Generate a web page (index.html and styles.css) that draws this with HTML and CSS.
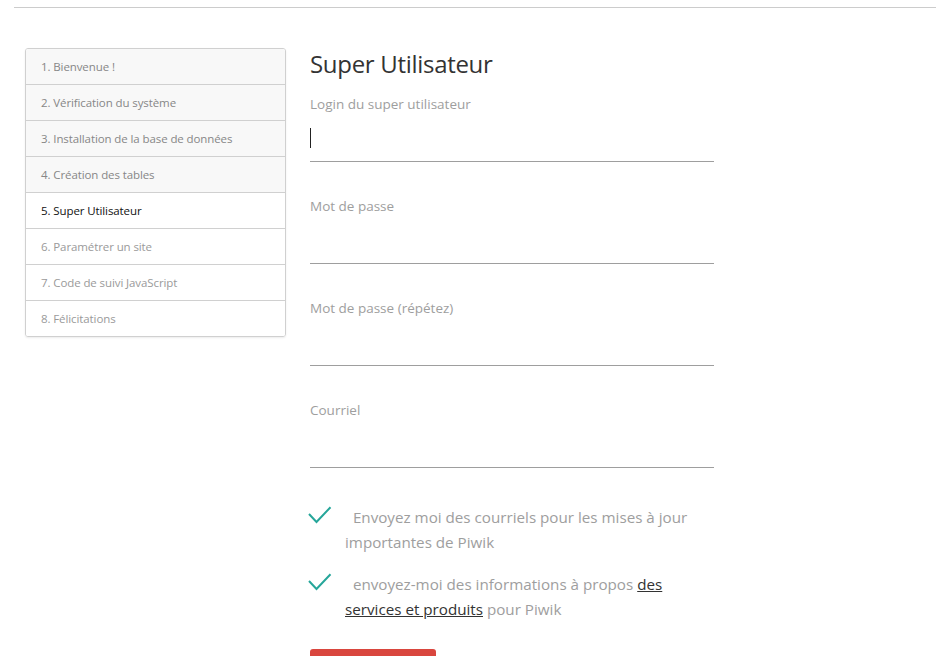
FILE: index.html
```html
<!DOCTYPE html>
<html lang="fr">
<head>
<meta charset="utf-8">
<title>Installation</title>
<link rel="stylesheet" href="styles.css">
</head>
<body>
<div class="header"></div>
<div class="page">
  <ul class="steps">
    <li class="done">1. Bienvenue !</li>
    <li class="done">2. Vérification du système</li>
    <li class="done">3. Installation de la base de données</li>
    <li class="done">4. Création des tables</li>
    <li class="current">5. Super Utilisateur</li>
    <li>6. Paramétrer un site</li>
    <li>7. Code de suivi JavaScript</li>
    <li>8. Félicitations</li>
  </ul>
  <form class="content">
    <h2 class="title">Super Utilisateur</h2>
    <div class="fields">
      <div class="field">
        <label class="label">Login du super utilisateur</label>
        <div class="input"><span class="caret"></span></div>
      </div>
      <div class="field">
        <label class="label">Mot de passe</label>
        <div class="input"></div>
      </div>
      <div class="field">
        <label class="label">Mot de passe (répétez)</label>
        <div class="input"></div>
      </div>
      <div class="field">
        <label class="label">Courriel</label>
        <div class="input"></div>
      </div>
    </div>
    <div class="checks">
      <div class="check">
        <svg class="tick" width="24" height="19" viewBox="0 0 24 19"><path d="M1 8 L8.5 16 L22.5 1.2" fill="none" stroke="#26a69a" stroke-width="2"/></svg>
        <p class="check-text">&nbsp;&nbsp;Envoyez moi des courriels pour les mises à jour importantes de Piwik</p>
      </div>
      <div class="check">
        <svg class="tick" width="24" height="19" viewBox="0 0 24 19"><path d="M1 8 L8.5 16 L22.5 1.2" fill="none" stroke="#26a69a" stroke-width="2"/></svg>
        <p class="check-text">&nbsp;&nbsp;envoyez-moi des informations à propos <a href="#">des services et produits</a> pour Piwik</p>
      </div>
    </div>
    <div class="submit">Suivant »</div>
  </form>
</div>
</body>
</html>
```
FILE: styles.css
```css
html, body {
  margin: 0;
  padding: 0;
  background: #fff;
  font-family: "Open Sans", "Noto Sans", sans-serif;
}
.header {
  height: 7px;
  margin-left: 14px;
  border-bottom: 1px solid #cccccc;
}
.page {
  display: flex;
  align-items: flex-start;
  padding-top: 40px;
  padding-left: 25px;
}
.steps {
  list-style: none;
  margin: 0;
  padding: 0;
  width: 259px;
  border: 1px solid #d0d0d0;
  border-radius: 3px;
  box-shadow: 0 1px 2px rgba(0,0,0,0.08);
  overflow: hidden;
}
.steps li {
  height: 35px;
  line-height: 35px;
  padding-left: 15px;
  font-size: 11.5px;
  letter-spacing: -0.1px;
  color: #9a9a9a;
  background: #fff;
  border-top: 1px solid #d0d0d0;
}
.steps li:first-child {
  border-top: none;
}
.steps li.done {
  background: #f8f8f8;
  color: #878787;
}
.steps li.current {
  color: #111;
}
.content {
  margin: 0 0 0 24px;
  width: 404px;
}
.title {
  margin: 0;
  font-size: 24px;
  font-weight: 400;
  color: #333;
  line-height: 32px;
  letter-spacing: -0.3px;
}
.fields {
  display: flex;
  flex-direction: column;
  gap: 35px;
  margin-top: 15px;
}
.label {
  display: block;
  font-size: 13.5px;
  color: #9e9e9e;
  line-height: 18px;
}
.input {
  height: 48px;
  border-bottom: 1px solid #9e9e9e;
  position: relative;
}
.caret {
  position: absolute;
  left: 0;
  top: 15px;
  width: 1px;
  height: 20px;
  background: #222;
}
.checks {
  display: flex;
  flex-direction: column;
  gap: 17px;
  margin-top: 37px;
}
.check {
  display: flex;
  align-items: flex-start;
}
.tick {
  flex: none;
  margin-left: -2px;
  margin-top: 1px;
  margin-right: 13px;
}
.check-text {
  margin: 0;
  font-size: 15.2px;
  line-height: 25px;
  color: #9e9e9e;
}
.check-text a {
  color: #333;
  text-decoration: underline;
}
.submit {
  margin-top: 27px;
  width: 126px;
  height: 36px;
  background: #d9463e;
  border-radius: 3px;
  color: #fff;
  font-size: 14px;
  line-height: 36px;
  text-align: center;
}
```
